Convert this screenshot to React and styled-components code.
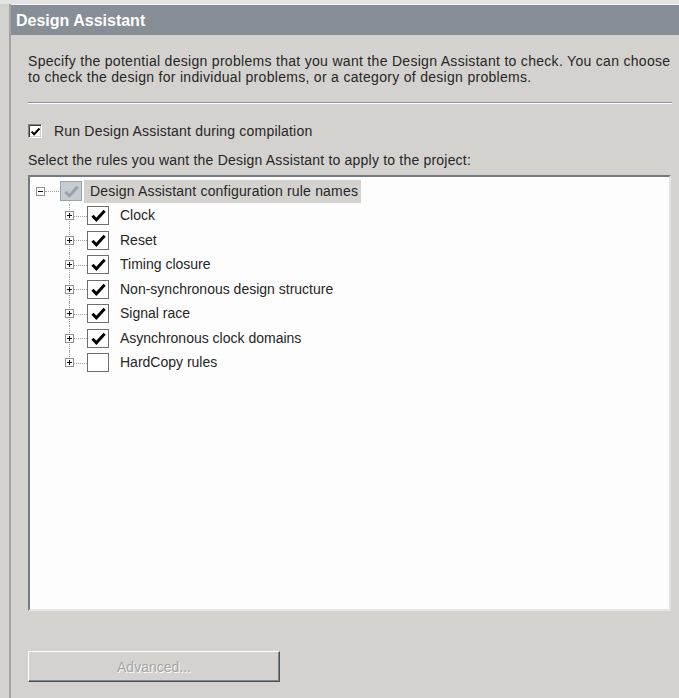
import React from 'react';
import styled, { createGlobalStyle } from 'styled-components';

const GlobalStyle = createGlobalStyle`
  html, body {
    margin: 0;
    padding: 0;
    background: #d4d2cf;
  }
  body {
    font-family: "Liberation Sans", Arial, sans-serif;
    color: #262626;
  }
`;

const Window = styled.div`
  width: 679px;
  height: 698px;
  box-sizing: border-box;
  background: #d4d2cf;
  border-top: 4px solid #e3e3e3;
  padding-left: 9px;
  display: flex;
  overflow: hidden;
`;

const Panel = styled.section`
  flex: 1;
  display: flex;
  flex-direction: column;
  border-left: 2px solid #a4a4a4;
`;

const Header = styled.h2`
  margin: 0;
  height: 31px;
  box-sizing: border-box;
  border-top: 1px solid #f2f2f2;
  background: #878e95;
  color: #ffffff;
  font-size: 16px;
  font-weight: bold;
  display: flex;
  align-items: center;
  padding: 2px 0 0 5px;
`;

const Body = styled.div`
  display: flex;
  flex-direction: column;
  padding: 18px 7px 0 17px;
`;

const Description = styled.p`
  margin: 0;
  font-size: 14px;
  line-height: 16px;
  letter-spacing: 0.3px;
  white-space: nowrap;
`;

const Separator = styled.hr`
  margin: 17px 0 0;
  height: 0;
  border: 0;
  border-top: 1px solid #8d9399;
  border-bottom: 1px solid #ffffff;
`;

const CheckRow = styled.label`
  margin-top: 19px;
  display: flex;
  align-items: center;
  gap: 12px;
  height: 16px;
  font-size: 14px;
  letter-spacing: 0.2px;
`;

const ClassicBox = styled.span`
  width: 14px;
  height: 14px;
  box-sizing: border-box;
  background: #ffffff;
  border: 1px solid;
  border-color: #808080 #ffffff #ffffff #808080;
  box-shadow: inset 1px 1px #404040, inset -1px -1px #d4d0c8;
  display: flex;
  align-items: center;
  justify-content: center;
`;

const FieldLabel = styled.div`
  margin-top: 13px;
  font-size: 14px;
  line-height: 16px;
  letter-spacing: 0.2px;
`;

const TreeBox = styled.ul`
  list-style: none;
  margin: 7px 1px 0 0;
  padding: 2px 0 0 6px;
  height: 436px;
  box-sizing: border-box;
  background: #fdfdfd;
  border: 2px solid;
  border-color: #737a80 #e4e4e4 #e4e4e4 #737a80;
  font-size: 14px;
`;

const Row = styled.li`
  display: flex;
  align-items: center;
  height: 24.5px;
  padding-left: ${({ $indent }) => $indent}px;
`;

const Expander = styled.span`
  position: relative;
  z-index: 1;
  width: 9px;
  height: 9px;
  box-sizing: border-box;
  border: 1px solid #929292;
  background: #ffffff;
  flex: none;

  &::before {
    content: '';
    position: absolute;
    left: 1px;
    right: 1px;
    top: 3px;
    height: 1px;
    background: #111;
  }

  &::after {
    content: '';
    display: ${({ $open }) => ($open ? 'none' : 'block')};
    position: absolute;
    top: 1px;
    bottom: 1px;
    left: 3px;
    width: 1px;
    background: #111;
  }
`;

const Connector = styled.span`
  width: ${({ $width }) => $width}px;
  height: 0;
  border-top: 1px dotted #a2a2a2;
  flex: none;
`;

const Branch = styled.span`
  position: relative;
  align-self: stretch;
  width: 22px;
  display: flex;
  align-items: center;
  flex: none;

  /* vertical guide running down the child list */
  &::before {
    content: '';
    position: absolute;
    left: 4px;
    top: 0;
    bottom: ${({ $last }) => ($last ? '50%' : '0')};
    border-left: 1px dotted #a2a2a2;
  }

  &::after {
    content: '';
    position: absolute;
    left: 9px;
    right: 0;
    top: 50%;
    border-top: 1px dotted #a2a2a2;
  }
`;

const RuleBox = styled.span`
  width: 22px;
  height: ${({ $root }) => ($root ? 20 : 19)}px;
  box-sizing: border-box;
  margin-left: ${({ $root }) => ($root ? 1 : 0)}px;
  border: 1px solid ${({ $root }) => ($root ? '#9ca3a9' : '#6e6e6e')};
  background: ${({ $root }) => ($root ? '#c6ccd1' : '#ffffff')};
  display: flex;
  align-items: center;
  justify-content: center;
  flex: none;
`;

const RuleName = styled.span`
  margin-left: ${({ $root }) => ($root ? 2 : 11)}px;
  padding: ${({ $root }) => ($root ? '0 3px 0 6px' : '0')};
  height: 23px;
  line-height: 23px;
  white-space: nowrap;
  letter-spacing: ${({ $root }) => ($root ? '0.18px' : '0')};
  background: ${({ $root }) => ($root ? '#d4d2cf' : 'transparent')};
`;

const Button = styled.button`
  margin-top: 40px;
  width: 252px;
  height: 31px;
  box-sizing: border-box;
  background: #d4d2cf;
  border: 1px solid;
  border-color: #ffffff #4a5056 #4a5056 #ffffff;
  box-shadow: inset -1px -1px #80868b;
  font-family: "Liberation Sans", Arial, sans-serif;
  font-size: 14px;
  color: #a4a4a4;
  text-shadow: 1px 1px 0 #ffffff;
  padding: 0;
`;

const Tick = ({ color = '#000', size = 14 }) => (
  <svg width={size} height={size} viewBox="0 0 16 16">
    <path d="M2.3 8.2 L6 12 L13.8 3.6" fill="none" stroke={color} strokeWidth="2.8" />
  </svg>
);

const rules = [
  { name: 'Clock', checked: true },
  { name: 'Reset', checked: true },
  { name: 'Timing closure', checked: true },
  { name: 'Non-synchronous design structure', checked: true },
  { name: 'Signal race', checked: true },
  { name: 'Asynchronous clock domains', checked: true },
  { name: 'HardCopy rules', checked: false },
];

const App = () => (
  <>
    <GlobalStyle />
    <Window>
      <Panel>
        <Header>Design Assistant</Header>
        <Body>
          <Description>
            Specify the potential design problems that you want the Design Assistant to check. You can choose
            <br />
            to check the design for individual problems, or a category of design problems.
          </Description>
          <Separator />
          <CheckRow>
            <ClassicBox>
              <Tick size={11} />
            </ClassicBox>
            Run Design Assistant during compilation
          </CheckRow>
          <FieldLabel>Select the rules you want the Design Assistant to apply to the project:</FieldLabel>
          <TreeBox>
            <Row $indent={0}>
              <Expander $open />
              <Connector $width={14} />
              <RuleBox $root>
                <Tick color="#9aa1a7" size={17} />
              </RuleBox>
              <RuleName $root>Design Assistant configuration rule names</RuleName>
            </Row>
            {rules.map((rule, i) => (
              <Row key={rule.name} $indent={29}>
                <Branch $last={i === rules.length - 1}>
                  <Expander />
                </Branch>
                <RuleBox>{rule.checked && <Tick size={17} />}</RuleBox>
                <RuleName>{rule.name}</RuleName>
              </Row>
            ))}
          </TreeBox>
          <Button disabled>Advanced...</Button>
        </Body>
      </Panel>
    </Window>
  </>
);

export default App;
